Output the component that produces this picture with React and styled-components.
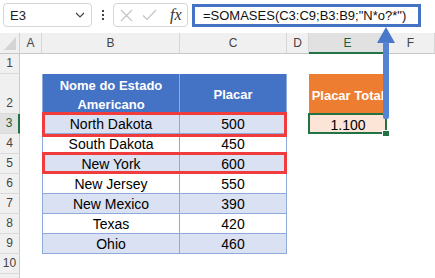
import styled, { createGlobalStyle } from "styled-components";

const GlobalStyle = createGlobalStyle`
  html, body {
    margin: 0;
    padding: 0;
    background: #fff;
  }
  body {
    overflow: hidden;
  }
`;

const Window = styled.div`
  position: relative;
  width: 435px;
  height: 278px;
  overflow: hidden;
  background: #fff;
  font-family: "Liberation Sans", Arial, sans-serif;
`;

const Toolbar = styled.div`
  display: flex;
  align-items: flex-start;
  height: 33px;
  padding: 3px 0 0 3px;
  box-sizing: border-box;
`;

const NameBox = styled.div`
  display: flex;
  align-items: center;
  justify-content: space-between;
  width: 89px;
  height: 24px;
  box-sizing: border-box;
  padding: 0 6px;
  border: 1px solid #d6d6d6;
  border-radius: 4px;
  font-size: 13px;
  color: #222;
`;

const Grip = styled.div`
  display: flex;
  flex-direction: column;
  align-items: center;
  gap: 2px;
  width: 21px;
  padding-top: 7px;

  span {
    width: 2px;
    height: 2px;
    background: #444;
  }
`;

const FxBox = styled.div`
  display: flex;
  align-items: center;
  width: 75px;
  height: 24px;
  box-sizing: border-box;
  padding-left: 6px;
  gap: 9px;
  border: 1px solid #d6d6d6;
  border-radius: 4px;
`;

const Fx = styled.span`
  font-family: "Liberation Serif", "Times New Roman", serif;
  font-style: italic;
  font-size: 16px;
  color: #333;
  margin-left: 4px;
`;

const FormulaBox = styled.div`
  display: flex;
  align-items: center;
  width: 229px;
  height: 23px;
  margin: 1px 0 0 4px;
  box-sizing: border-box;
  padding-left: 8px;
  border: 3px solid #4472c4;
  font-size: 13px;
  color: #111;
  white-space: nowrap;
`;

const Sheet = styled.div`
  display: grid;
  grid-template-columns: 20px 22px 138px 107px 22px 78px 48px;
  grid-template-rows: 21px 20px 40px repeat(9, 20px);
`;

// every sheet item sits on an explicit track so the markers can overlap
const placed = (p) => `
  grid-row: ${p.$r};
  grid-column: ${p.$c};
`;

const Corner = styled.div`
  ${placed}
  display: flex;
  align-items: flex-end;
  justify-content: flex-end;
  padding: 0 3px 3px 0;
  background: #f0f0f0;
  border-right: 1px solid #d0d0d0;
  border-bottom: 1px solid #c8c8c8;
`;

const ColHeader = styled.div`
  ${placed}
  display: flex;
  align-items: center;
  justify-content: center;
  box-sizing: border-box;
  background: ${(p) => (p.$selected ? "#e1e1e1" : "#f0f0f0")};
  border-right: 1px solid #d6d6d6;
  border-bottom: ${(p) => (p.$selected ? "2px solid #217346" : "1px solid #c8c8c8")};
  font-size: 12px;
  color: ${(p) => (p.$selected ? "#1f5f3c" : "#444")};
`;

const RowHeader = styled.div`
  ${placed}
  display: flex;
  align-items: flex-end;
  justify-content: center;
  box-sizing: border-box;
  padding-bottom: 3px;
  background: ${(p) => (p.$selected ? "#e1e1e1" : "#f0f0f0")};
  border-right: ${(p) => (p.$selected ? "2px solid #217346" : "1px solid #c8c8c8")};
  border-bottom: 1px solid #dadada;
  font-size: 12px;
  color: ${(p) => (p.$selected ? "#1f5f3c" : "#444")};
`;

const Cell = styled.div`
  ${placed}
  position: relative;
  display: flex;
  align-items: center;
  justify-content: center;
  box-sizing: border-box;
  padding-top: 2px;
  background: ${(p) => p.$fill || "#fff"};
  color: ${(p) => p.$color || "#000"};
  font-size: ${(p) => (p.$bold ? "13px" : "14px")};
  font-weight: ${(p) => (p.$bold ? 700 : 400)};
  line-height: 19px;
  text-align: center;
  white-space: nowrap;
  border-right: ${(p) => (p.$boxed ? "1px solid #8eaadb" : "none")};
  border-bottom: ${(p) => (p.$boxed ? "1px solid #8eaadb" : "none")};
  border-left: ${(p) => (p.$first ? "1px solid #8eaadb" : "none")};
`;

const ActiveCell = styled(Cell)`
  &::after {
    content: "";
    position: absolute;
    inset: -1px 0 0 -1px;
    border: 2px solid #217346;
  }

  &::before {
    content: "";
    position: absolute;
    right: -3px;
    bottom: -3px;
    width: 6px;
    height: 5px;
    background: #217346;
    border: 1px solid #fff;
    z-index: 1;
  }
`;

const Marker = styled.div`
  ${placed}
  position: relative;
  z-index: 2;

  &::after {
    content: "";
    position: absolute;
    inset: -2px 0 ${(p) => p.$drop || "-2px"} 0;
    border: 3px solid #f03c3c;
  }
`;

const Arrow = styled.svg`
  position: absolute;
  left: 376px;
  top: 27px;
  z-index: 3;
`;

const BLUE = "#d9e1f2";
const HEAD = "#4472c4";

const states = [
  ["North Dakota", 500],
  ["South Dakota", 450],
  ["New York", 600],
  ["New Jersey", 550],
  ["New Mexico", 390],
  ["Texas", 420],
  ["Ohio", 460],
];

const columns = ["A", "B", "C", "D", "E", "F"];

function renderRow(r) {
  const gr = r + 1;
  const cells = [
    <RowHeader key={"h" + r} $r={gr} $c={1} $selected={r === 3}>
      {r <= 10 ? r : ""}
    </RowHeader>,
  ];
  const data = r >= 3 && r <= 9 ? states[r - 3] : null;
  const fill = data && r % 2 === 1 ? BLUE : "#fff";

  columns.forEach((col, i) => {
    const at = { key: col + r, $r: gr, $c: i + 2 };
    if (col === "B" && r === 2) {
      cells.push(
        <Cell {...at} $fill={HEAD} $color="#fff" $bold $boxed $first>
          Nome do Estado
          <br />
          Americano
        </Cell>
      );
    } else if (col === "C" && r === 2) {
      cells.push(
        <Cell {...at} $fill={HEAD} $color="#fff" $bold $boxed>
          Placar
        </Cell>
      );
    } else if (col === "B" && data) {
      cells.push(
        <Cell {...at} $fill={fill} $boxed $first>
          {data[0]}
        </Cell>
      );
    } else if (col === "C" && data) {
      cells.push(
        <Cell {...at} $fill={fill} $boxed>
          {data[1]}
        </Cell>
      );
    } else if (col === "E" && r === 2) {
      cells.push(
        <Cell {...at} $fill="#ed7d31" $color="#fff" $bold>
          Placar Total
        </Cell>
      );
    } else if (col === "E" && r === 3) {
      cells.push(
        <ActiveCell {...at} $fill="#fce4d6">
          1.100
        </ActiveCell>
      );
    } else {
      cells.push(<Cell {...at} />);
    }
  });
  return cells;
}

export default function App() {
  const rows = Array.from({ length: 11 }, (_, i) => i + 1);

  return (
    <Window>
      <GlobalStyle />
      <Toolbar>
        <NameBox>
          E3
          <svg width="10" height="6" viewBox="0 0 10 6">
            <path d="M1 1 L5 5 L9 1" fill="none" stroke="#444" strokeWidth="1.2" />
          </svg>
        </NameBox>
        <Grip>
          <span />
          <span />
          <span />
        </Grip>
        <FxBox>
          <svg width="13" height="13" viewBox="0 0 13 13">
            <path d="M1 1 L12 12 M12 1 L1 12" stroke="#c4c4c4" strokeWidth="1.2" />
          </svg>
          <svg width="15" height="12" viewBox="0 0 15 12">
            <path d="M1 6.5 L5 10.5 L14 1" fill="none" stroke="#c4c4c4" strokeWidth="1.2" />
          </svg>
          <Fx>fx</Fx>
        </FxBox>
        <FormulaBox>=SOMASES(C3:C9;B3:B9;"N*o?*")</FormulaBox>
      </Toolbar>

      <Sheet>
        <Corner $r={1} $c={1}>
          <svg width="12" height="13" viewBox="0 0 12 13">
            <polygon points="12,0 12,13 0,13" fill="#d4d4d4" />
          </svg>
        </Corner>
        {columns.map((c, i) => (
          <ColHeader key={c} $r={1} $c={i + 2} $selected={c === "E"}>
            {c}
          </ColHeader>
        ))}
        {rows.map((r) => renderRow(r))}
        <Marker $r={4} $c="3 / 5" $drop="-3px" />
        <Marker $r={6} $c="3 / 5" $drop="0" />
      </Sheet>

      <Arrow width="20" height="93" viewBox="0 0 20 93">
        <polygon points="10,0 19,16 1,16" fill="#4a79cc" />
        <rect x="7" y="15" width="6" height="77" rx="2" fill="#5584d4" />
      </Arrow>
    </Window>
  );
}
